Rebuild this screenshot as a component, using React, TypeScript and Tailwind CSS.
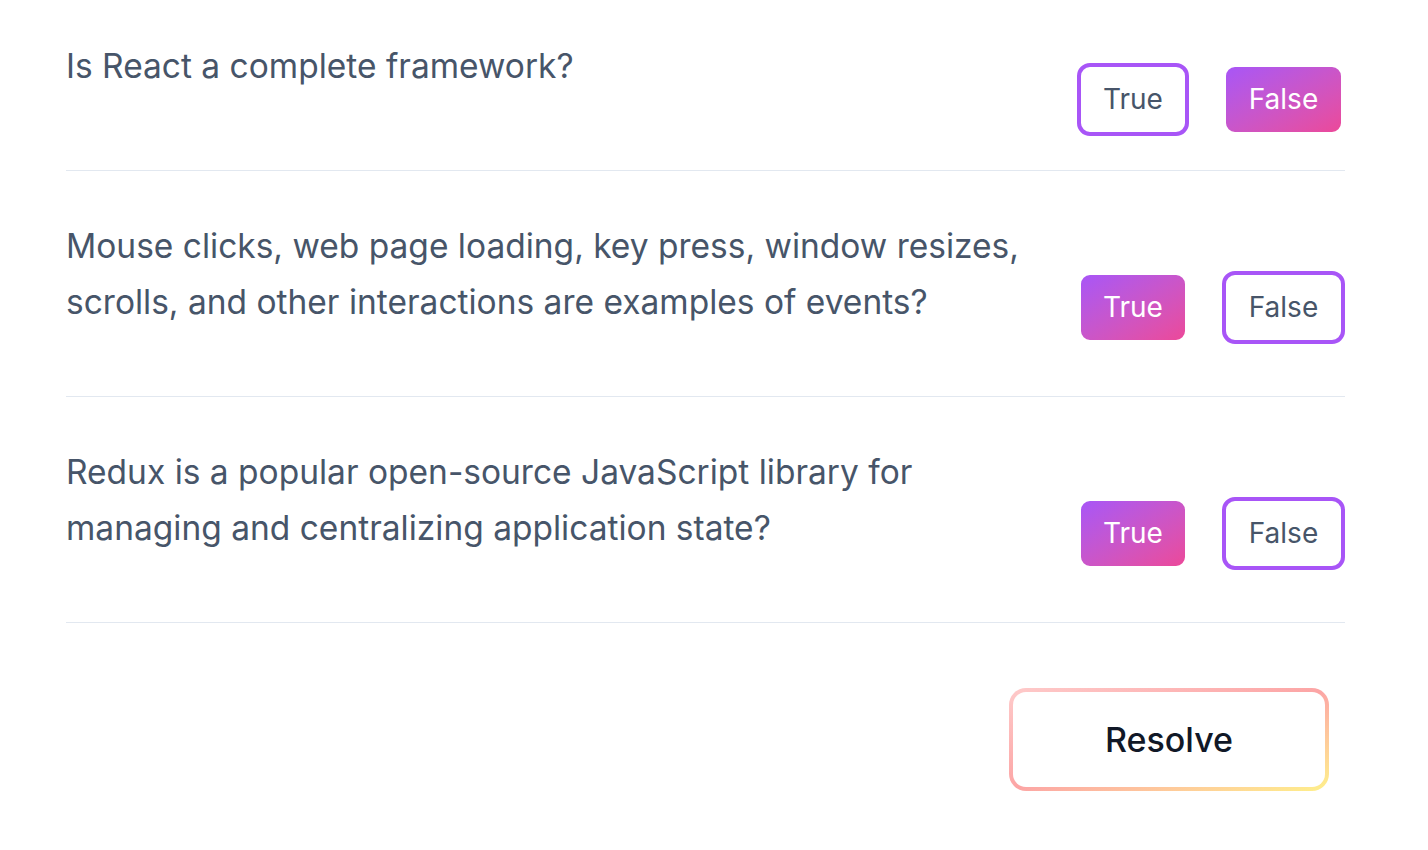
import { useState } from "react";

type Question = {
  id: number;
  text: string[];
  answer: boolean;
};

const questions: Question[] = [
  { id: 1, text: ["Is React a complete framework?"], answer: false },
  {
    id: 2,
    text: [
      "Mouse clicks, web page loading, key press, window resizes,",
      "scrolls, and other interactions are examples of events?",
    ],
    answer: true,
  },
  {
    id: 3,
    text: [
      "Redux is a popular open-source JavaScript library for",
      "managing and centralizing application state?",
    ],
    answer: true,
  },
];

// Botao de escolha: contorno roxo quando livre, gradiente quando marcado.
function ChoiceButton({
  label,
  active,
  width,
  onClick,
}: {
  label: string;
  active: boolean;
  width: string;
  onClick: () => void;
}) {
  return (
    <button
      type="button"
      onClick={onClick}
      className={`h-[73px] ${width} rounded-[13px] border-4 text-[28px] leading-[40px] ${
        active
          ? "border-white bg-gradient-to-br from-[#a855f7] to-[#ec4899] text-white"
          : "border-[#a855f7] bg-white text-[#475569]"
      }`}
    >
      {label}
    </button>
  );
}

export default function App() {
  const [answers, setAnswers] = useState<Record<number, boolean>>({
    1: false,
    2: true,
    3: true,
  });

  return (
    <div
      className="min-h-[850px] bg-white pl-[66px]"
      style={{ fontFamily: "Inter, 'Noto Sans', sans-serif" }}
    >
      <div className="w-[1279px]">
        {questions.map((q, i) => (
          <div
            key={q.id}
            className={`flex items-center justify-between border-b border-[#e2e8f0] ${
              i === 0 ? "pt-[38px] pb-[10px]" : "pt-[47px]"
            }`}
          >
            <p className="mb-[66px] text-[33.5px] leading-[56px] text-[#475569]">
              {q.text.map((line) => (
                <span key={line} className="block">
                  {line}
                </span>
              ))}
            </p>
            <div className="flex items-center gap-[33px]">
              <ChoiceButton
                label="True"
                width="w-[112px]"
                active={answers[q.id] === true}
                onClick={() => setAnswers({ ...answers, [q.id]: true })}
              />
              <ChoiceButton
                label="False"
                width="w-[123px]"
                active={answers[q.id] === false}
                onClick={() => setAnswers({ ...answers, [q.id]: false })}
              />
            </div>
          </div>
        ))}

        <div className="flex justify-end pt-[65px] pr-[16px]">
          <button
            type="button"
            className="rounded-[17px] bg-gradient-to-br from-[#fecaca] via-[#fca5a5] to-[#fef08a] p-1"
          >
            <span className="flex h-[95px] w-[312px] items-center justify-center rounded-[13px] bg-white text-[34px] font-medium text-[#111827]">
              Resolve
            </span>
          </button>
        </div>
      </div>
    </div>
  );
}
